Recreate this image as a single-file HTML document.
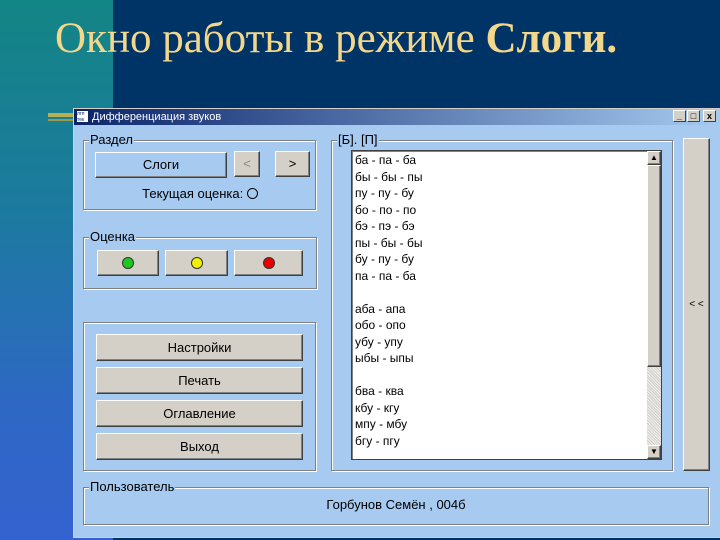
<!DOCTYPE html>
<html><head><meta charset="utf-8"><style>
*{margin:0;padding:0;box-sizing:border-box}
body{width:720px;height:540px;overflow:hidden;position:relative;background:#003366;font-family:"Liberation Sans",sans-serif}
.strip{position:absolute;left:0;top:0;width:113px;height:540px;background:linear-gradient(#138585,#1d7aa0 40%,#2e68c4 75%,#3462d0)}
h1{position:absolute;left:55px;top:14px;font-family:"Liberation Serif",serif;font-weight:normal;font-size:43px;color:#f3d88c;white-space:nowrap;letter-spacing:0}
h1 b{font-weight:bold}
.a{position:absolute}
.win{left:73px;top:108px;width:647px;height:430px;background:#a6caf0;border:1px solid #d4d0c8;border-right:none}
.title{left:74px;top:109px;width:646px;height:16px;background:linear-gradient(90deg,#0a246a,#a6caf0);color:#fff;font-size:11px;line-height:16px;padding-left:18px}
.grp{border:1px solid #808080;box-shadow:1px 1px 0 #fff inset,1px 1px 0 #fff}
.lbl{position:absolute;top:-9px;left:5px;background:#a6caf0;font-size:13px;color:#000;padding:0 1px;line-height:16px}
.btn{background:#d4d0c8;border:1px solid;border-color:#fff #404040 #404040 #fff;box-shadow:inset -1px -1px 0 #808080;font-size:13px;text-align:center;color:#000}
.tb{width:13px;height:12px;top:110px;background:#d4d0c8;border:1px solid;border-color:#fff #404040 #404040 #fff;font-size:9px;text-align:center;line-height:10px;font-weight:bold}
.dot{display:inline-block;width:12px;height:12px;border-radius:50%;border:1px solid #333;margin-top:6px}
.list{left:351px;top:150px;width:311px;height:310px;background:#fff;border:1px solid #404040;box-shadow:inset 1px 1px 0 #808080}
.list div{font-size:12px;line-height:16.5px;padding-left:3px;color:#000}
</style></head><body>
<div class="strip"></div>
<h1>Окно работы в режиме <b>Слоги.</b></h1>
<div class="a" style="left:48px;top:113px;width:26px;height:4px;background:#b8b050"></div>
<div class="a" style="left:48px;top:119px;width:26px;height:2px;background:#9a9a50"></div>
<div class="a win"></div>
<div class="a title">Дифференциация звуков</div>
<div class="a" style="left:76px;top:110px;width:13px;height:13px;background:#fff;border:1px solid #0a246a;font-size:5px;color:#0a246a;line-height:6px">лгп тек</div>
<div class="a tb" style="left:673px">_</div>
<div class="a tb" style="left:687px">□</div>
<div class="a tb" style="left:703px">x</div>

<div class="a grp" style="left:83px;top:140px;width:233px;height:70px"><span class="lbl">Раздел</span></div>
<div class="a btn" style="left:95px;top:152px;width:132px;height:26px;background:#a6caf0;line-height:24px">Слоги</div>
<div class="a btn" style="left:234px;top:151px;width:26px;height:26px;line-height:24px;color:#888">&lt;</div>
<div class="a btn" style="left:275px;top:151px;width:35px;height:26px;line-height:24px">&gt;</div>
<div class="a" style="left:95px;top:186px;width:210px;text-align:center;font-size:13px">Текущая оценка: <span style="display:inline-block;width:11px;height:11px;border:1px solid #000;border-radius:50%;vertical-align:-1px"></span></div>

<div class="a grp" style="left:83px;top:237px;width:234px;height:52px"><span class="lbl">Оценка</span></div>
<div class="a btn" style="left:97px;top:250px;width:62px;height:26px"><span class="dot" style="background:#1ec81e"></span></div>
<div class="a btn" style="left:165px;top:250px;width:63px;height:26px"><span class="dot" style="background:#f0f000"></span></div>
<div class="a btn" style="left:234px;top:250px;width:69px;height:26px"><span class="dot" style="background:#e80000"></span></div>

<div class="a grp" style="left:83px;top:322px;width:233px;height:149px"></div>
<div class="a btn" style="left:96px;top:334px;width:207px;height:27px;line-height:25px">Настройки</div>
<div class="a btn" style="left:96px;top:367px;width:207px;height:27px;line-height:25px">Печать</div>
<div class="a btn" style="left:96px;top:400px;width:207px;height:27px;line-height:25px">Оглавление</div>
<div class="a btn" style="left:96px;top:433px;width:207px;height:27px;line-height:25px">Выход</div>

<div class="a grp" style="left:331px;top:140px;width:342px;height:331px"><span class="lbl">[Б]. [П]</span></div>
<div class="a list">
<div style="padding-top:1px">ба - па - ба</div><div>бы - бы - пы</div><div>пу - пу - бу</div><div>бо - по - по</div><div>бэ - пэ - бэ</div><div>пы - бы - бы</div><div>бу - пу - бу</div><div>па - па - ба</div><div>&nbsp;</div><div>аба - апа</div><div>обо - опо</div><div>убу - упу</div><div>ыбы - ыпы</div><div>&nbsp;</div><div>бва - ква</div><div>кбу - кгу</div><div>мпу - мбу</div><div>бгу - пгу</div>
</div>
<div class="a" style="left:647px;top:151px;width:14px;height:308px;background:repeating-linear-gradient(45deg,#eee 0 1px,#d4d0c8 1px 2px)"></div>
<div class="a btn" style="left:647px;top:151px;width:14px;height:14px;font-size:8px;line-height:12px">▲</div>
<div class="a btn" style="left:647px;top:165px;width:14px;height:202px"></div>
<div class="a btn" style="left:647px;top:445px;width:14px;height:14px;font-size:8px;line-height:12px">▼</div>

<div class="a btn" style="left:683px;top:138px;width:27px;height:333px;font-size:10px;padding-top:160px">&lt; &lt;</div>

<div class="a grp" style="left:83px;top:487px;width:626px;height:38px"><span class="lbl">Пользователь</span></div>
<div class="a" style="left:83px;top:497px;width:626px;text-align:center;font-size:13px">Горбунов Семён , 004б</div>
</body></html>
